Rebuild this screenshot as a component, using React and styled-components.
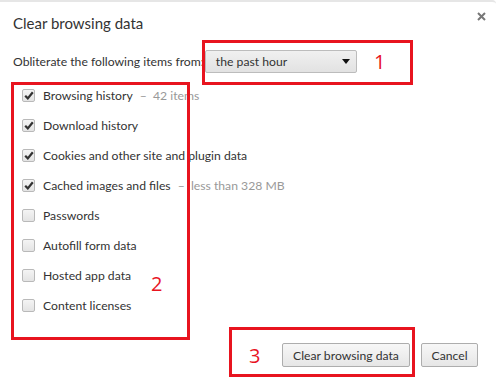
import React from 'react'
import styled, { createGlobalStyle } from 'styled-components'

const Global = createGlobalStyle`
  html, body { margin: 0; padding: 0; background: #fff; }
  body { font-family: "Lato", "Open Sans", sans-serif; color: #333; }
`

const items = [
  { label: 'Browsing history', note: '42 items', checked: true },
  { label: 'Download history', checked: true },
  { label: 'Cookies and other site and plugin data', checked: true },
  { label: 'Cached images and files', note: 'less than 328 MB', checked: true },
  { label: 'Passwords' },
  { label: 'Autofill form data' },
  { label: 'Hosted app data' },
  { label: 'Content licenses' },
]

const Dialog = styled.div`
  position: relative;
  width: 496px;
  height: 382px;
  box-sizing: border-box;
  border-top: 2px solid #e6e6e6;
  border-top-right-radius: 4px;
  padding: 11px 10px 0 13px;
  display: flex;
  flex-direction: column;
  overflow: hidden;
`

const Header = styled.div`
  display: flex;
  justify-content: space-between;
  align-items: flex-start;
`

const Title = styled.h1`
  margin: 0;
  font-size: 15px;
  font-weight: 400;
  color: #333;
  line-height: 20px;
`

const Close = styled.svg`
  margin-top: -1px;
`

const FromRow = styled.div`
  display: flex;
  align-items: center;
  margin-top: 17px;
  font-size: 12.2px;
  gap: 1px;
`

const Select = styled.div`
  width: 152px;
  height: 23px;
  box-sizing: border-box;
  border: 1px solid #bcbcbc;
  border-radius: 2px;
  background: linear-gradient(#f0f0f0, #e2e2e2);
  display: flex;
  align-items: center;
  justify-content: space-between;
  padding: 0 6px 0 10px;
  font-size: 12.2px;
  color: #333;
`

const Caret = styled.span`
  width: 0;
  height: 0;
  border-left: 4px solid transparent;
  border-right: 4px solid transparent;
  border-top: 5px solid #111;
`

const List = styled.ul`
  list-style: none;
  margin: 7px 0 0 0;
  padding: 0 0 0 9px;
  display: flex;
  flex-direction: column;
`

const Row = styled.li`
  height: 30px;
  display: flex;
  align-items: center;
  font-size: 12.2px;
  color: #333;
`

const Box = styled.span`
  width: 13px;
  height: 13px;
  box-sizing: border-box;
  border: 1px solid #b9b9b9;
  border-radius: 2px;
  background: linear-gradient(#f4f4f4, #e4e4e4);
  margin-right: 8px;
  display: flex;
  align-items: center;
  justify-content: center;
`

const Note = styled.span`
  color: #999;
  margin-left: 7px;
`

const Footer = styled.div`
  display: flex;
  justify-content: flex-end;
  gap: 11px;
  margin-top: 23px;
  padding-right: 8px;
`

const Button = styled.button`
  height: 24px;
  box-sizing: border-box;
  border: 1px solid #adadad;
  border-radius: 2px;
  background: linear-gradient(#f7f7f7, #e6e6e6);
  font-family: inherit;
  font-size: 12.2px;
  color: #333;
  width: ${p => p.$w}px;
  padding: 0;
`

const Mark = styled.div`
  position: absolute;
  left: ${p => p.$x}px;
  top: ${p => p.$y}px;
  width: ${p => p.$w}px;
  height: ${p => p.$h}px;
  box-sizing: border-box;
  border: 3px solid #e8141f;
  pointer-events: none;
`

const Num = styled.span`
  position: absolute;
  left: ${p => p.$x}px;
  top: ${p => p.$y}px;
  color: #e8141f;
  font-family: "Open Sans", sans-serif;
  font-size: 20px;
  line-height: 20px;
`

const Tick = () => (
  <svg width="10" height="9" viewBox="0 0 10 9">
    <path d="M1.2 4.8 L3.8 7.4 L8.8 1.2" fill="none" stroke="#333" strokeWidth="2.2" />
  </svg>
)

export default function App() {
  return (
    <>
      <Global />
      <Dialog>
        <Header>
          <Title>Clear browsing data</Title>
          <Close width="9" height="9" viewBox="0 0 9 9">
            <path d="M1 1 L8 8 M8 1 L1 8" stroke="#777" strokeWidth="2" />
          </Close>
        </Header>
        <FromRow>
          <span>Obliterate the following items from:</span>
          <Select>
            <span>the past hour</span>
            <Caret />
          </Select>
        </FromRow>
        <List>
          {items.map(it => (
            <Row key={it.label}>
              <Box>{it.checked && <Tick />}</Box>
              {it.label}
              {it.note && <Note>–&nbsp; {it.note}</Note>}
            </Row>
          ))}
        </List>
        <Footer>
          <Button $w={128}>Clear browsing data</Button>
          <Button $w={57}>Cancel</Button>
        </Footer>
        <Mark $x={202} $y={38} $w={211} $h={45} />
        <Num $x={374} $y={50}>1</Num>
        <Mark $x={11} $y={80} $w={179} $h={258} />
        <Num $x={151} $y={272}>2</Num>
        <Mark $x={229} $y={325} $w={186} $h={50} />
        <Num $x={249} $y={344}>3</Num>
      </Dialog>
    </>
  )
}
